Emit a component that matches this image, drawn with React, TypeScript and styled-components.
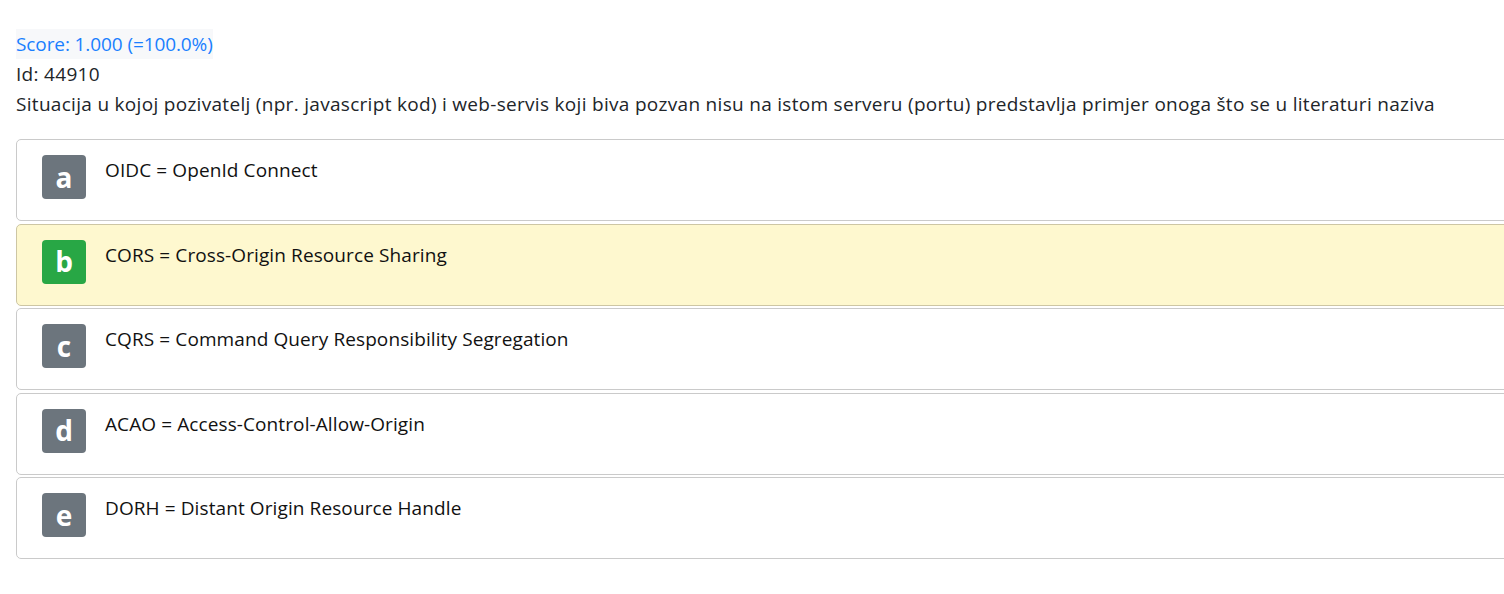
import React from "react";
import styled, { createGlobalStyle } from "styled-components";

const Global = createGlobalStyle`
  html, body { margin: 0; padding: 0; background: #fff; overflow: hidden; }
  body { font-family: "Open Sans", "Noto Sans", sans-serif; color: #212529; }
`;

const Page = styled.main`
  padding: 29px 0 0 16px;
  width: 1540px;
`;

const Line = styled.div`
  font-size: 19px;
  line-height: 30px;
  letter-spacing: 0.3px;
`;

const Score = styled.span`
  color: #1a7fff;
  background: #f7f8fa;
  display: inline-block;
  letter-spacing: -0.1px;
`;

const List = styled.div`
  margin-top: 20px;
  display: flex;
  flex-direction: column;
  gap: 2.5px;
`;

const Card = styled.div<{ $selected?: boolean }>`
  box-sizing: border-box;
  height: 82px;
  border: 1px solid ${(p) => (p.$selected ? "#cdc6a4" : "#cacaca")};
  background: ${(p) => (p.$selected ? "#fef8cf" : "#fff")};
  border-radius: 5px;
  padding: 15px 25px;
  display: flex;
  align-items: flex-start;
  gap: 19px;
`;

const Badge = styled.div<{ $correct?: boolean }>`
  width: 44px;
  height: 44px;
  flex: none;
  border-radius: 4px;
  background: ${(p) => (p.$correct ? "#28a745" : "#6c757d")};
  color: #fff;
  font-weight: 700;
  font-size: 28px;
  display: flex;
  align-items: center;
  justify-content: center;
  line-height: 1;
  padding-bottom: 1px;
  box-sizing: border-box;
`;

const Answer = styled.div`
  font-size: 19px;
  line-height: 30px;
  letter-spacing: 0.1px;
  color: #111;
`;

const answers = [
  { k: "a", t: "OIDC = OpenId Connect" },
  { k: "b", t: "CORS = Cross-Origin Resource Sharing", ok: true },
  { k: "c", t: "CQRS = Command Query Responsibility Segregation" },
  { k: "d", t: "ACAO = Access-Control-Allow-Origin" },
  { k: "e", t: "DORH = Distant Origin Resource Handle" },
];

export default function App() {
  return (
    <>
      <Global />
      <Page>
        <Line>
          <Score>Score: 1.000 (=100.0%)</Score>
        </Line>
        <Line>Id: 44910</Line>
        <Line>
          Situacija u kojoj pozivatelj (npr. javascript kod) i web-servis koji biva pozvan nisu na istom serveru (portu) predstavlja primjer onoga što se u literaturi naziva
        </Line>
        <List>
          {answers.map((a) => (
            <Card key={a.k} $selected={a.ok}>
              <Badge $correct={a.ok}>{a.k}</Badge>
              <Answer>{a.t}</Answer>
            </Card>
          ))}
        </List>
      </Page>
    </>
  );
}
